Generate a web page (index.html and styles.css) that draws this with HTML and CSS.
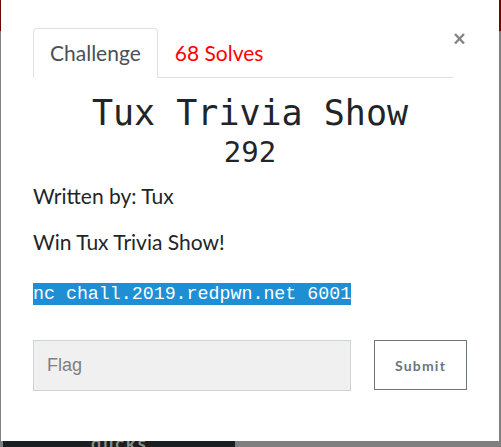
FILE: index.html
```html
<!DOCTYPE html>
<html>
<head>
<meta charset="utf-8">
<link rel="stylesheet" href="styles.css">
</head>
<body>
<div class="page">
  <div class="navbar"></div>
  <div class="backdrop-body">
    <div class="dark-card"><span class="card-label">ducks</span></div>
  </div>
</div>
<div class="modal">
  <div class="modal-head">
    <ul class="tabs">
      <li class="tab active">Challenge</li>
      <li class="tab solves">68 Solves</li>
    </ul>
    <button class="close" aria-label="Close">
      <svg width="13" height="12" viewBox="0 0 13 12"><path d="M2 1L11 10.5M11 1L2 10.5" stroke="#858585" stroke-width="2.4" stroke-linecap="butt"/></svg>
    </button>
  </div>
  <h3 class="title">Tux Trivia Show</h3>
  <h4 class="value">292</h4>
  <p class="text author">Written by: Tux</p>
  <p class="text desc">Win Tux Trivia Show!</p>
  <p class="code-line"><span class="code">nc chall.2019.redpwn.net 6001</span></p>
  <div class="form">
    <input class="flag" type="text" placeholder="Flag">
    <button class="submit">Submit</button>
  </div>
</div>
</body>
</html>
```
FILE: styles.css
```css
html, body {
  margin: 0;
  padding: 0;
}
body {
  width: 501px;
  height: 447px;
  overflow: hidden;
  background: #7f7f7f;
  font-family: Lato, "Liberation Sans", sans-serif;
}
.page {
  display: flex;
  flex-direction: column;
  height: 447px;
}
.navbar {
  height: 31px;
  background: #6e0606;
}
.backdrop-body {
  flex: 1;
  display: flex;
  align-items: flex-end;
  padding-left: 3px;
}
.dark-card {
  width: 232px;
  height: 6px;
  background: #1b1e21;
  position: relative;
  overflow: hidden;
}
.card-label {
  position: absolute;
  left: 88px;
  top: -8px;
  color: #8a8c8e;
  font-size: 18px;
  line-height: 20px;
  font-weight: bold;
  letter-spacing: 2px;
}
.modal {
  position: absolute;
  left: 1px;
  top: 0;
  width: 498px;
  height: 441px;
  background: #fff;
  box-sizing: border-box;
  padding: 28px 32px 0 32px;
}
.modal-head {
  display: flex;
  align-items: flex-start;
}
.tabs {
  flex: 1;
  display: flex;
  list-style: none;
  margin: 0;
  padding: 0;
  border-bottom: 1px solid #dee2e6;
}
.tab {
  font-size: 21px;
  line-height: 30px;
  padding: 9px 16px;
  margin-bottom: -1px;
  border: 1px solid transparent;
  border-top-left-radius: 4px;
  border-top-right-radius: 4px;
}
.tab.active {
  color: #495057;
  border-color: #dee2e6 #dee2e6 #fff;
  background: #fff;
}
.tab.solves {
  color: #ff0000;
}
.close {
  background: none;
  border: 0;
  padding: 0;
  margin: 5px 0 0 0;
  width: 14px;
  height: 12px;
  display: flex;
  align-items: center;
  justify-content: flex-start;
}
.title {
  margin: 14px 0 0;
  text-align: center;
  font-family: "DejaVu Sans Mono", monospace;
  font-weight: normal;
  font-size: 35px;
  line-height: 42px;
  color: #212529;
}
.value {
  margin: 0;
  text-align: center;
  font-family: "DejaVu Sans Mono", monospace;
  font-weight: normal;
  font-size: 29px;
  line-height: 36px;
  color: #212529;
}
.text {
  margin: 0;
  font-size: 21px;
  line-height: 30px;
  color: #212529;
}
.author {
  margin-top: 11px;
}
.desc {
  margin-top: 16px;
}
.code-line {
  margin: 25px 0 0;
  line-height: 21px;
}
.code {
  font-family: "Liberation Mono", monospace;
  font-size: 18.3px;
  background: #1e8fd4;
  color: #fff;
  padding: 1px 0;
}
.form {
  display: flex;
  gap: 23px;
  margin-top: 35px;
  align-items: flex-start;
}
.flag {
  width: 318px;
  height: 51px;
  box-sizing: border-box;
  background: #f0f0f0;
  border: 1px solid #ced4da;
  padding: 0 13px;
  font-family: "Liberation Sans", Arial, sans-serif;
  font-size: 18px;
  color: #495057;
  outline: none;
}
.flag::placeholder {
  color: #7c8186;
}
.submit {
  width: 93px;
  height: 50px;
  box-sizing: border-box;
  background: #fff;
  border: 1px solid #6c757d;
  font-family: Lato, sans-serif;
  font-weight: bold;
  font-size: 14px;
  letter-spacing: 1.2px;
  color: #6c757d;
}
```
